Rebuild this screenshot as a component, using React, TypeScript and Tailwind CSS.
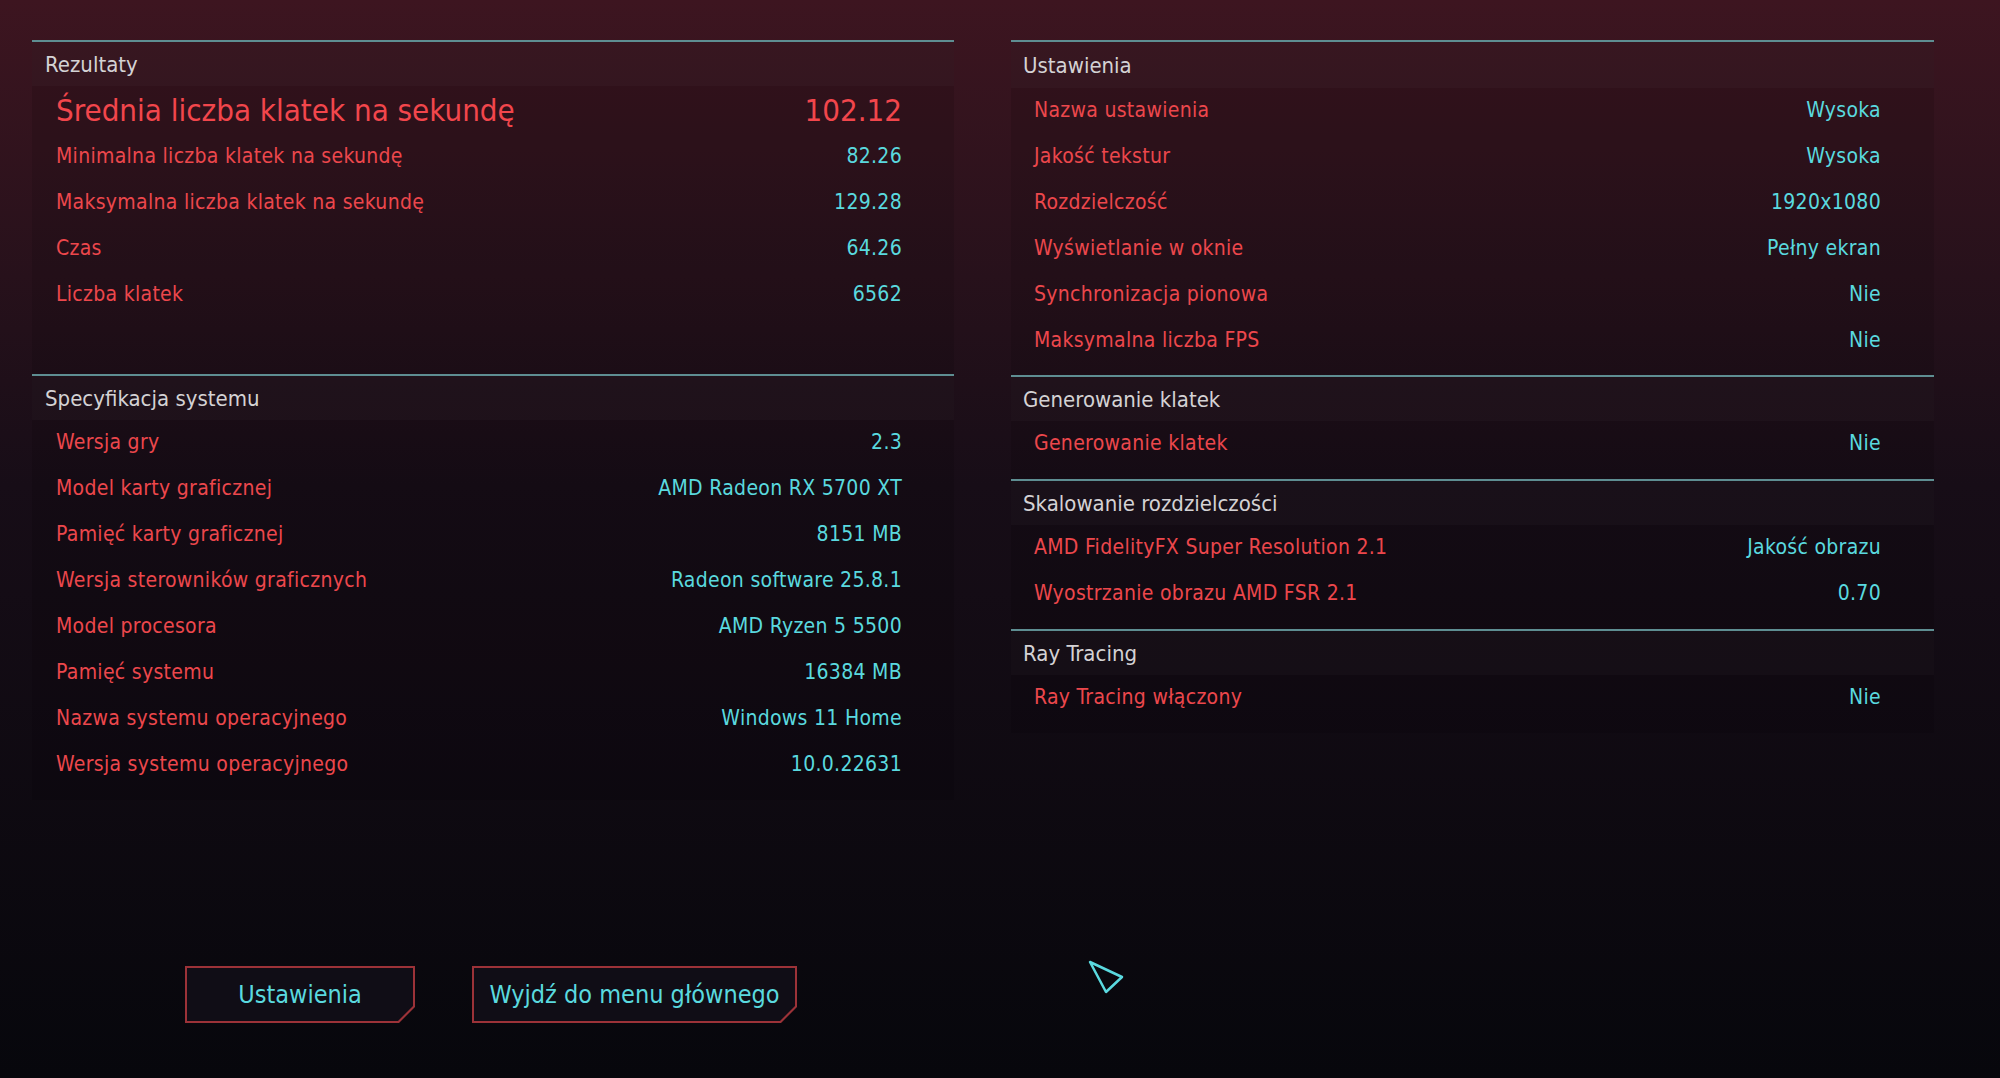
import React from 'react';

type Row = { label: string; value: string };

const font = { fontFamily: '"Liberation Sans Narrow", "DejaVu Sans Condensed", "Liberation Sans", sans-serif' };

const results: Row[] = [
  { label: 'Minimalna liczba klatek na sekundę', value: '82.26' },
  { label: 'Maksymalna liczba klatek na sekundę', value: '129.28' },
  { label: 'Czas', value: '64.26' },
  { label: 'Liczba klatek', value: '6562' },
];

const specs: Row[] = [
  { label: 'Wersja gry', value: '2.3' },
  { label: 'Model karty graficznej', value: 'AMD Radeon RX 5700 XT' },
  { label: 'Pamięć karty graficznej', value: '8151 MB' },
  { label: 'Wersja sterowników graficznych', value: 'Radeon software 25.8.1' },
  { label: 'Model procesora', value: 'AMD Ryzen 5 5500' },
  { label: 'Pamięć systemu', value: '16384 MB' },
  { label: 'Nazwa systemu operacyjnego', value: 'Windows 11 Home' },
  { label: 'Wersja systemu operacyjnego', value: '10.0.22631' },
];

const settings: Row[] = [
  { label: 'Nazwa ustawienia', value: 'Wysoka' },
  { label: 'Jakość tekstur', value: 'Wysoka' },
  { label: 'Rozdzielczość', value: '1920x1080' },
  { label: 'Wyświetlanie w oknie', value: 'Pełny ekran' },
  { label: 'Synchronizacja pionowa', value: 'Nie' },
  { label: 'Maksymalna liczba FPS', value: 'Nie' },
];

const Header: React.FC<{ title: string; pad: string; height: string }> = ({ title, pad, height }) => (
  <div className={`${height} flex items-center bg-white/[0.025] text-[22px] text-[#d4d2d4] ${pad}`}>{title}</div>
);

const Rows: React.FC<{ rows: Row[]; pad: string }> = ({ rows, pad }) => (
  <>
    {rows.map(r => (
      <div key={r.label} className={`h-[46px] flex items-center justify-between text-[21px] tracking-[0.3px] ${pad}`}>
        <span className="text-[#ec474c]">{r.label}</span>
        <span className="text-[#5ad9df]">{r.value}</span>
      </div>
    ))}
  </>
);

const Section: React.FC<{
  title: string;
  rows: Row[];
  side: 'left' | 'right';
  bottom?: string;
  headHeight?: string;
  children?: React.ReactNode;
}> = ({ title, rows, side, bottom = 'pb-3', headHeight = 'h-[44px]', children }) => {
  const headPad = side === 'left' ? 'pl-[13px]' : 'pl-[12px]';
  const rowPad = side === 'left' ? 'pl-[24px] pr-[52px]' : 'pl-[23px] pr-[53px]';
  return (
    <div className={`border-t-2 border-[#5e8e92] bg-black/[0.1] ${bottom}`}>
      <Header title={title} pad={headPad} height={headHeight} />
      {children}
      <Rows rows={rows} pad={rowPad} />
    </div>
  );
};

const CutButton: React.FC<{ label: string; width: string }> = ({ label, width }) => (
  <div
    className={`h-[57px] ${width} bg-[#9c3238] p-[2px] [clip-path:polygon(0_0,100%_0,100%_calc(100%_-_16px),calc(100%_-_16px)_100%,0_100%)]`}
  >
    <div className="h-full w-full bg-[#100d16] flex items-center justify-center text-[25px] text-[#5ad9df] [clip-path:polygon(0_0,100%_0,100%_calc(100%_-_15px),calc(100%_-_15px)_100%,0_100%)]">
      {label}
    </div>
  </div>
);

export default function App() {
  return (
    <div
      className="relative w-[2000px] h-[1078px] overflow-hidden bg-linear-to-b from-[#3d1520] via-[#170d17] via-45% to-[#07070c]"
      style={font}
    >
      <div className="grid grid-cols-[922px_923px] gap-[57px] pl-[32px] pt-[40px]">
        {/* Left column */}
        <div className="flex flex-col">
          <Section title="Rezultaty" rows={results} side="left" bottom="pb-[56px]">
            <div className="h-[48px] flex items-center justify-between pl-[24px] pr-[52px] text-[31px] text-[#f2464c]">
              <span>Średnia liczba klatek na sekundę</span>
              <span>102.12</span>
            </div>
          </Section>
          <Section title="Specyfikacja systemu" rows={specs} side="left" />

          <div className="flex gap-[57px] ml-[153px] mt-[166px]">
            <CutButton label="Ustawienia" width="w-[230px]" />
            <CutButton label="Wyjdź do menu głównego" width="w-[325px]" />
          </div>
        </div>

        {/* Right column */}
        <div className="flex flex-col">
          <Section title="Ustawienia" rows={settings} side="right" headHeight="h-[46px]" bottom="pb-[11px]" />
          <Section title="Generowanie klatek" rows={[{ label: 'Generowanie klatek', value: 'Nie' }]} side="right" />
          <Section
            title="Skalowanie rozdzielczości"
            rows={[
              { label: 'AMD FidelityFX Super Resolution 2.1', value: 'Jakość obrazu' },
              { label: 'Wyostrzanie obrazu AMD FSR 2.1', value: '0.70' },
            ]}
            side="right"
          />
          <Section title="Ray Tracing" rows={[{ label: 'Ray Tracing włączony', value: 'Nie' }]} side="right" />
        </div>
      </div>

      {/* cursor */}
      <svg className="absolute left-[1084px] top-[958px]" width="44" height="40" viewBox="0 0 44 40" fill="none">
        <path d="M6 4 L38 19 L22 34 Z" stroke="#5ad9df" strokeWidth="2.5" strokeLinejoin="round" />
      </svg>
    </div>
  );
}
